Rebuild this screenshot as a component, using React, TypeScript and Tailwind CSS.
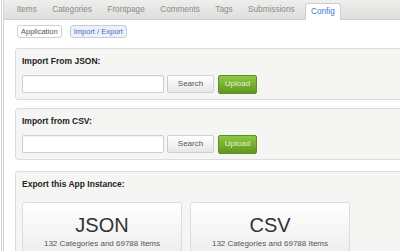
import React from 'react';

const tabs = ['Items', 'Categories', 'Frontpage', 'Comments', 'Tags', 'Submissions', 'Config'];

const ImportPanel = ({ title, className }: { title: string; className: string }) => (
  <div className={`border border-[#dcdddb] rounded-[3px] bg-[#f5f6f4] pl-[6px] pt-[7px] pb-[6px] ${className}`}>
    <div className="text-[8.5px] leading-[11px] font-bold text-[#222]">{title}</div>
    <div className="flex items-center mt-[8px] h-[18px]">
      <input
        className="w-[142px] h-[18px] bg-white border border-[#cfd0ce] rounded-[2px] shadow-[inset_0_1px_1px_rgba(0,0,0,0.06)] outline-none"
        type="text"
      />
      <button className="ml-[3px] w-[47px] h-[18px] border border-[#cfd0ce] rounded-[2px] bg-gradient-to-b from-white to-[#e6e7e5] text-[8px] text-[#555]">
        Search
      </button>
      <button className="ml-[4px] w-[39px] h-[19px] border border-[#5f8f22] rounded-[2px] bg-gradient-to-b from-[#8fc745] to-[#5e9820] text-[8px] text-[#e4f3cc]">
        Upload
      </button>
    </div>
  </div>
);

const ExportCard = ({ label }: { label: string }) => (
  <div className="w-[160px] h-[60px] border border-[#dcdcdc] rounded-[3px] bg-gradient-to-b from-white to-[#ebebeb] flex flex-col items-center">
    <div className="text-[20px] leading-[20px] mt-[12px] text-[#333]">{label}</div>
    <div className="text-[8px] leading-[10px] mt-[4px] text-[#555]">132 Categories and 69788 Items</div>
  </div>
);

export default function App() {
  return (
    <div className="w-[400px] h-[251px] overflow-hidden bg-white" style={{ fontFamily: '"Liberation Sans", Arial, sans-serif' }}>
      <div className="ml-px pl-px border-l border-[#d4d4d4] h-full">
        <div className="w-[440px] h-full border-l border-[#d4d4d4]">
          {/* tab bar */}
          <div className="h-[20px] bg-gradient-to-b from-[#eeeeec] to-[#dededc] border-b border-[#cfcfcd] flex items-end pl-[5px]">
            {tabs.map((t) =>
              t === 'Config' ? (
                <div
                  key={t}
                  className="h-[17px] -mb-px mx-[2.75px] px-[5px] bg-white border border-b-0 border-[#cfcfcd] rounded-t-[3px] text-[8.2px] leading-[16px] text-[#4477d6]"
                >
                  {t}
                </div>
              ) : (
                <div key={t} className="h-[17px] mx-[2.75px] px-[5px] text-[8.2px] leading-[16px] text-[#8a8a8a]">
                  {t}
                </div>
              )
            )}
          </div>

          {/* sub tabs */}
          <div className="flex pl-[13px] mt-[5px] gap-[8px]">
            <div className="h-[13px] px-[3px] border border-[#cfcfcd] rounded-[3px] bg-white text-[7.5px] leading-[11px] text-[#555]">
              Application
            </div>
            <div className="h-[13px] px-[3px] border border-[#c6ccd6] rounded-[3px] bg-[#eef1f6] text-[7.5px] leading-[11px] text-[#3f6fd0]">
              Import / Export
            </div>
          </div>

          <div className="pl-[11px] mt-[10px]">
            <ImportPanel title="Import From JSON:" className="" />
            <ImportPanel title="Import from CSV:" className="mt-[8px]" />

            <div className="mt-[11px] border border-[#dcdddb] rounded-[3px] bg-[#f5f6f4] pl-[6px] pt-[7px] h-[100px]">
              <div className="text-[8.5px] leading-[11px] font-bold text-[#222]">Export this App Instance:</div>
              <div className="flex gap-[8px] mt-[12px]">
                <ExportCard label="JSON" />
                <ExportCard label="CSV" />
              </div>
            </div>
          </div>
        </div>
      </div>
    </div>
  );
}
